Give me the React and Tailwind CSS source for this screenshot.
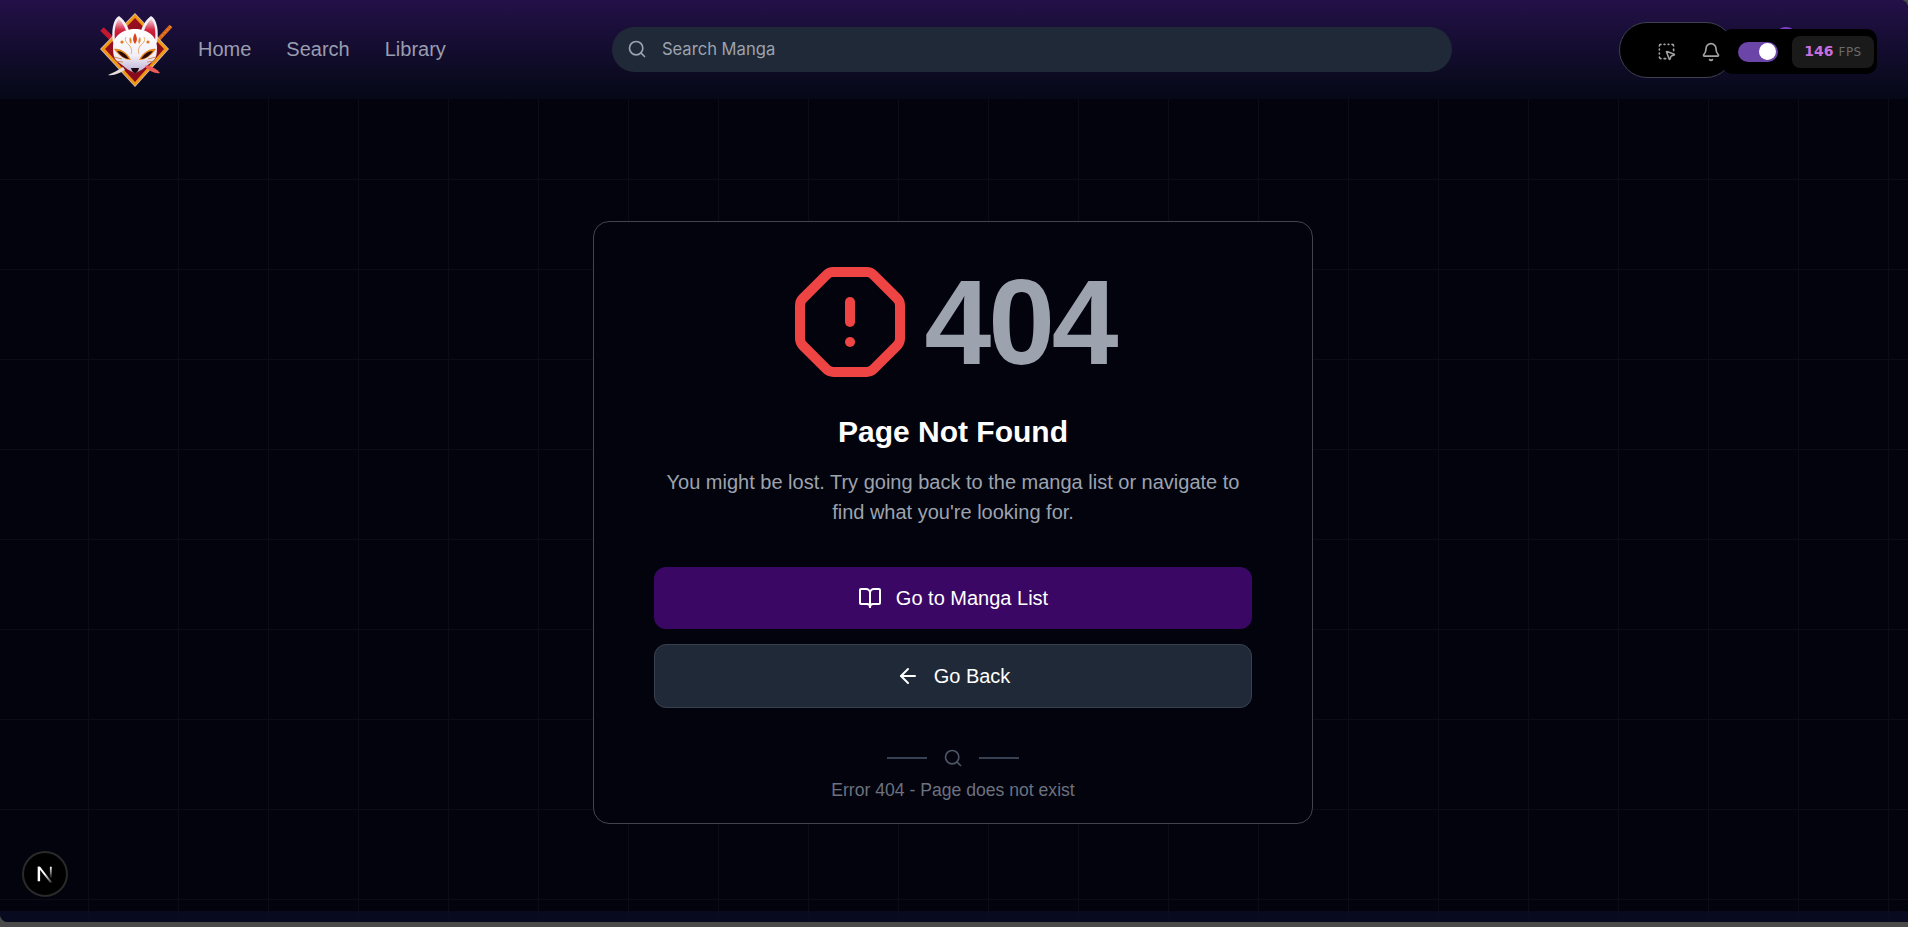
import React from "react";
import { OctagonAlert, BookOpen, ArrowLeft, Search, Bell, SquareDashedMousePointer } from "lucide-react";

function Logo() {
  return (
    <svg width="74" height="78" viewBox="0 0 74 78" className="shrink-0">
      <defs>
        <linearGradient id="face" x1="0" y1="0" x2="0" y2="1">
          <stop offset="0" stopColor="#ffffff" />
          <stop offset="0.6" stopColor="#f3eff8" />
          <stop offset="1" stopColor="#b9b0d2" />
        </linearGradient>
        <linearGradient id="ear" x1="0" y1="0" x2="0" y2="1">
          <stop offset="0" stopColor="#f2d4dc" />
          <stop offset="0.5" stopColor="#d3233f" />
          <stop offset="1" stopColor="#a50f25" />
        </linearGradient>
        <linearGradient id="dia" x1="0" y1="0" x2="1" y2="1">
          <stop offset="0" stopColor="#a00f22" />
          <stop offset="1" stopColor="#7e0a1a" />
        </linearGradient>
      </defs>
      {/* swords behind */}
      <path d="M2 18 L15 31" stroke="#c3182f" strokeWidth="5" />
      <path d="M71 15 L58 29" stroke="#d9641a" strokeWidth="4" />
      <path d="M71 15 L62 25" stroke="#f0a040" strokeWidth="1" strokeDasharray="2 2" />
      {/* diamond */}
      <path d="M35 2 L69 38 L35 76 L0 38 Z" fill="#d9c2d8" />
      <path d="M35 3 L68 38 L35 75 L1 38 Z" fill="#f0980f" />
      <path d="M35 7 L64 38 L35 71 L5 38 Z" fill="url(#dia)" />
      {/* ears */}
      <path d="M13 32 C11 20 13 8 19 5 C25 9 29 17 30 24 Z" fill="#f4eef6" />
      <path d="M15 30 C14 20 15 12 19 8 C23 12 26 18 27 24 Z" fill="url(#ear)" />
      <path d="M57 32 C59 20 57 8 51 5 C45 9 41 17 40 24 Z" fill="#f4eef6" />
      <path d="M55 30 C56 20 55 12 51 8 C47 12 44 18 43 24 Z" fill="url(#ear)" />
      <g transform="translate(0,-6)">
        {/* face */}
        <path d="M13 42 C13 30 24 24 35 24 C46 24 57 30 57 42 C57 50 56 54 52 57 C47 60 42 66 35 68 C28 66 23 60 18 57 C14 54 13 50 13 42 Z" fill="url(#face)" />
        {/* forehead marks */}
        <path d="M35 28 C37 32 38 35 35 39 C32 35 33 32 35 28 Z" fill="#d9401f" />
        <path d="M30 32 C32 34 32 37 31 39 C29 37 29 34 30 32 Z" fill="#e8892a" />
        <path d="M40 32 C38 34 38 37 39 39 C41 37 41 34 40 32 Z" fill="#e8892a" />
        <path d="M26 32 C24 36 27 38 30 41 C32 44 32 47 31 49" stroke="#eaa15c" strokeWidth="0.9" fill="none" />
        <path d="M44 32 C46 36 43 38 40 41 C38 44 38 47 39 49" stroke="#eaa15c" strokeWidth="0.9" fill="none" />
        <circle cx="22" cy="37" r="1.6" fill="#e07a20" />
        <circle cx="48" cy="37" r="1.6" fill="#e07a20" />
        {/* eyes */}
        <path d="M14 44 C20 43 27 47 31 55 C24 55 18 50 14 44 Z" fill="#e8861c" />
        <path d="M17 46 C22 46 26 49 29 54 C24 54 20 50 17 46 Z" fill="#2b0a06" />
        <path d="M56 44 C50 43 43 47 39 55 C46 55 52 50 56 44 Z" fill="#e8861c" />
        <path d="M53 46 C48 46 44 49 41 54 C46 54 50 50 53 46 Z" fill="#2b0a06" />
        {/* whiskers */}
        <path d="M14 52 L22 54 M15 56 L23 57" stroke="#c9772f" strokeWidth="0.8" />
        <path d="M56 52 L48 54 M55 56 L47 57" stroke="#c9772f" strokeWidth="0.8" />
        {/* nose */}
        <path d="M31 63 L39 63 C38 67 36 68 35 68 C34 68 32 67 31 63 Z" fill="#1c0a10" />
      </g>
      {/* blades */}
      <path d="M8 64 C13 62 18 59 23 56 L25 59 C20 62 14 65 8 64 Z" fill="#e6dcd8" />
      <path d="M60 62 C55 63 50 60 45 56 L47 54 C52 56 57 58 60 62 Z" fill="#ee5a58" />
    </svg>
  );
}

function NextLogo() {
  return (
    <svg width="22" height="22" viewBox="0 0 18 18">
      <defs>
        <linearGradient id="nfade" x1="0" y1="0" x2="1" y2="1">
          <stop offset="0.45" stopColor="#ffffff" />
          <stop offset="1" stopColor="#ffffff" stopOpacity="0.2" />
        </linearGradient>
        <linearGradient id="nfade2" x1="0" y1="0" x2="0" y2="1">
          <stop offset="0" stopColor="#ffffff" />
          <stop offset="1" stopColor="#ffffff" stopOpacity="0.1" />
        </linearGradient>
      </defs>
      <path d="M3 3 H5 V15 H3 Z" fill="#ffffff" />
      <path d="M3 3 H5 L15 16 H13 Z" fill="url(#nfade)" />
      <path d="M13 3 H14.5 V12 H13 Z" fill="url(#nfade2)" />
    </svg>
  );
}

export default function App() {
  const sans = "font-['Liberation_Sans',Arial,sans-serif]";
  return (
    <div className={`h-[927px] w-full overflow-hidden bg-[#4a4a4a] ${sans}`}>
      <div className="relative flex h-[922px] flex-col overflow-hidden rounded-tr-[8px] rounded-bl-[8px] bg-[#02030c]">
        <header className="flex h-[99px] shrink-0 items-center bg-gradient-to-b from-[#231048] to-[#060817] pl-[100px]">
          <Logo />
          <nav className="mb-[2px] ml-[24px] flex items-center gap-[35px] text-[20px] text-[#9a9db0]">
            <span>Home</span>
            <span>Search</span>
            <span>Library</span>
          </nav>
          <div className="ml-[166px] flex h-[45px] w-[840px] items-center rounded-full bg-[#1f2937] pb-[1px] pl-[15px] font-['Inter',sans-serif] text-[16.6px] text-[#9ca3af]">
            <Search size={20} strokeWidth={2} />
            <span className="ml-[15px]">Search Manga</span>
          </div>
          <div className="relative ml-[167px] flex h-[56px] w-[115px] items-center rounded-[28px] border border-[#3f4152] bg-black pt-[4px] pl-[37px]">
            <SquareDashedMousePointer size={19} strokeWidth={2} className="text-[#a3a3a3]" />
            <Bell size={20} strokeWidth={2} className="ml-[25px] text-[#a3a3a3]" />
          </div>
        </header>

        <div className="absolute top-[27px] left-[1775px] h-[22px] w-[22px] rounded-full bg-[#7c3fc4]" />
        <div className="absolute top-[29px] left-[1722px] flex h-[45px] w-[155px] items-center rounded-[10px] bg-black pl-[16px]">
          <div className="flex h-[20px] w-[40px] items-center justify-end rounded-full bg-[#6b46a8] pr-[2px]">
            <div className="h-[17px] w-[17px] rounded-full bg-white" />
          </div>
          <div className="ml-[14px] flex h-[32px] w-[82px] items-center justify-center gap-[5px] rounded-[8px] bg-[#1a1a1a] font-['DejaVu_Sans',sans-serif]">
            <span className="text-[14px] font-bold text-[#c86ee0]">146</span>
            <span className="text-[12px] tracking-[0.5px] text-[#6a6a6a]">FPS</span>
          </div>
        </div>

        <main className="relative flex flex-1 flex-col items-center bg-[linear-gradient(to_right,#0b0c16_1px,transparent_1px),linear-gradient(to_bottom,#0b0c16_1px,transparent_1px)] bg-[size:90px_90px] bg-[position:-2px_-10px] pt-[122px] pr-[2px]">
          <section className="flex h-[603px] w-[720px] flex-col items-center rounded-[16px] border border-[#41434e] bg-[#03030d] px-[60px] pt-[40px]">
            <div className="flex h-[120px] items-center gap-[14px]">
              <OctagonAlert size={120} strokeWidth={2} className="text-[#ef4444]" />
              <span className="text-[120px] leading-none font-bold tracking-tight text-[#9ca3af]">404</span>
            </div>
            <h1 className="mt-[32px] text-[30px] leading-[36px] font-bold text-white">Page Not Found</h1>
            <p className="mt-[17px] text-center text-[20px] leading-[30px] text-[#9ca3af]">
              You might be lost. Try going back to the manga list or navigate to find what you're looking for.
            </p>
            <button className="mt-[40px] flex h-[62px] w-full items-center justify-center gap-[14px] rounded-[12px] bg-[#3b0764] text-[20px] text-white">
              <BookOpen size={24} strokeWidth={2} />
              <span>Go to Manga List</span>
            </button>
            <button className="mt-[15px] flex h-[64px] w-full items-center justify-center gap-[14px] rounded-[12px] border border-[#374151] bg-[#1f2937] text-[20px] text-white">
              <ArrowLeft size={24} strokeWidth={2} />
              <span>Go Back</span>
            </button>
            <div className="mt-[40px] flex h-[20px] items-center gap-[16px] text-[#4b5563]">
              <div className="h-[2px] w-[40px] bg-[#374151]" />
              <Search size={20} strokeWidth={2} />
              <div className="h-[2px] w-[40px] bg-[#374151]" />
            </div>
            <p className="mt-[10px] text-[17.6px] leading-[24px] text-[#6b7280]">Error 404 - Page does not exist</p>
          </section>
          <div className="absolute bottom-0 left-0 right-0 h-[11px] bg-[#0a0c24]/80" />
          <div className="absolute bottom-[25px] left-[22px] flex h-[46px] w-[46px] items-center justify-center rounded-full border-2 border-[#2a2a2a] bg-black">
            <NextLogo />
          </div>
        </main>
      </div>
    </div>
  );
}
